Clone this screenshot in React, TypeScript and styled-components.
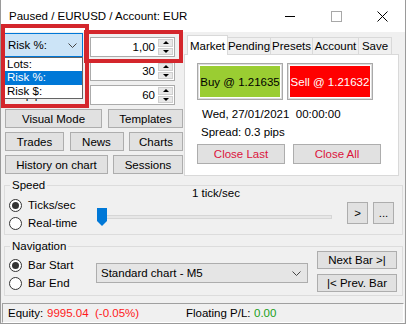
import styled, { createGlobalStyle } from "styled-components";

const GlobalStyle = createGlobalStyle`
  body {
    margin: 0;
    font-family: "Liberation Sans", Arial, sans-serif;
    font-size: 11px;
    color: #000;
  }
`;

const Window = styled.div`
  position: relative;
  width: 406px;
  height: 324px;
  box-sizing: border-box;
  border: 1px solid #9a9a9a;
  border-top: none;
  background: #f0f0f0;
  display: flex;
  flex-direction: column;
  overflow: hidden;
`;

const TitleBar = styled.div`
  height: 32px;
  flex-shrink: 0;
  background: #fff;
  display: flex;
  align-items: center;
  padding-left: 8px;
`;

const Title = styled.div`
  flex: 1;
  font-size: 11.5px;
`;

const WinButton = styled.div`
  width: 46px;
  height: 32px;
  display: flex;
  align-items: center;
  justify-content: center;
`;

const MinLine = styled.div`
  width: 10px;
  height: 1px;
  background: #000;
`;

const MaxBox = styled.div`
  width: 9px;
  height: 9px;
  border: 1px solid #a8a8a8;
`;

// top part: parameters on the left, tabs on the right
const TopSection = styled.div`
  height: 144px;
  flex-shrink: 0;
  display: flex;
`;

const LeftCol = styled.div`
  width: 179px;
  padding: 1px 0 0 3px;
`;

const ParamRow = styled.div`
  position: relative;
  width: 171px;
  height: 24px;
  display: flex;
  align-items: flex-end;
  justify-content: space-between;
`;

const ParamLabel = styled.div`
  height: 20px;
  line-height: 20px;
  padding-left: 4px;
  font-size: 11.5px;
`;

const Combo = styled.div`
  width: 79px;
  height: 24px;
  box-sizing: border-box;
  background: #cce4f7;
  border: 1px solid #0078d7;
  display: flex;
  align-items: center;
  justify-content: space-between;
  padding: 0 5px 0 3px;
  font-size: 11.5px;
`;

const DropList = styled.div`
  position: absolute;
  left: 0;
  top: 24px;
  width: 79px;
  box-sizing: border-box;
  border: 1px solid #646464;
  background: #fff;
  z-index: 2;
`;

const DropItem = styled.div<{ $active?: boolean }>`
  height: 13.3px;
  line-height: 13px;
  padding-left: 2px;
  font-size: 11.5px;
  background: ${(p) => (p.$active ? "#0078d7" : "#fff")};
  color: ${(p) => (p.$active ? "#fff" : "#000")};
`;

const NumInput = styled.div`
  width: 85px;
  height: 20px;
  box-sizing: border-box;
  border: 1px solid #ababab;
  background: #fff;
  display: flex;
`;

const NumValue = styled.div`
  flex: 1;
  text-align: right;
  line-height: 18px;
  padding-right: 3px;
  font-size: 11.5px;
`;

const Spinner = styled.div`
  width: 15px;
  display: flex;
  flex-direction: column;
  gap: 1px;
  padding: 1px 1px 1px 0;
`;

const SpinBtn = styled.div<{ $down?: boolean }>`
  flex: 1;
  background: #e8e8e8;
  border: 1px solid #cfcfcf;
  display: flex;
  align-items: center;
  justify-content: center;

  &::after {
    content: "";
    border-left: 3px solid transparent;
    border-right: 3px solid transparent;
    ${(p) =>
      p.$down ? "border-top: 3px solid #000;" : "border-bottom: 3px solid #000;"}
  }
`;

const ButtonGrid = styled.div`
  margin: 4px 0 0 1px;
  width: 178px;
  display: flex;
  flex-direction: column;
  gap: 4px;
`;

const ButtonRow = styled.div`
  display: flex;
  justify-content: space-between;
`;

const Button = styled.div<{ $w: number; $h?: number; $color?: string }>`
  width: ${(p) => p.$w}px;
  height: ${(p) => p.$h ?? 19}px;
  box-sizing: border-box;
  background: #e1e1e1;
  border: 1px solid #adadad;
  color: ${(p) => p.$color ?? "#000"};
  display: flex;
  align-items: center;
  justify-content: center;
  font-size: 11.5px;
  white-space: pre;
`;

const TabArea = styled.div`
  width: 215px;
  margin-left: 1px;
  display: flex;
  flex-direction: column;
`;

const TabStrip = styled.div`
  height: 22px;
  display: flex;
  align-items: flex-end;
  padding-left: 4px;
`;

const Tab = styled.div<{ $w: number; $active?: boolean }>`
  position: relative;
  width: ${(p) => p.$w}px;
  height: ${(p) => (p.$active ? 20 : 17)}px;
  box-sizing: border-box;
  border: 1px solid #d9d9d9;
  border-bottom: none;
  margin-left: -1px;
  margin-bottom: ${(p) => (p.$active ? -1 : 0)}px;
  background: ${(p) => (p.$active ? "#fff" : "#f0f0f0")};
  z-index: ${(p) => (p.$active ? 1 : 0)};
  display: flex;
  align-items: center;
  justify-content: center;
  font-size: 11.5px;
`;

const TabPanel = styled.div`
  height: 122px;
  box-sizing: border-box;
  background: #fff;
  border: 1px solid #d9d9d9;
  padding: 8px 0 0 12px;
`;

const TradeRow = styled.div`
  display: flex;
  gap: 4px;
`;

const TradeButton = styled.div<{ $bg: string; $fg: string }>`
  width: 86px;
  height: 37px;
  box-sizing: border-box;
  border: 1px solid #a9a9a9;
  box-shadow: inset 0 0 0 1px #dedede;
  padding: 2px;
  background: ${(p) => p.$bg};
  background-clip: content-box;
  color: ${(p) => p.$fg};
  display: flex;
  align-items: center;
  justify-content: center;
  font-size: 11.5px;
`;

const InfoLine = styled.div<{ $mt: number; $ml: number }>`
  margin: ${(p) => p.$mt}px 0 0 ${(p) => p.$ml}px;
  line-height: 13px;
  white-space: pre;
  font-size: 11.5px;
`;

const CloseRow = styled.div`
  margin-top: 5px;
  display: flex;
  gap: 8px;
`;

// group boxes
const GroupBox = styled.fieldset<{ $mt: number }>`
  margin: ${(p) => p.$mt}px 2px 0 3px;
  padding: 0;
  border: 1px solid #dcdcdc;
  height: 56px;
  box-sizing: border-box;
  min-width: 0;
  flex-shrink: 0;
`;

const Legend = styled.legend`
  margin-left: 5px;
  padding: 0 2px;
  line-height: 13px;
  font-size: 11.5px;
`;

const GroupInner = styled.div`
  display: flex;
  height: 42px;
`;

const RadioGroup = styled.div<{ $pt: number }>`
  width: 87px;
  padding: ${(p) => p.$pt}px 0 0 4px;
`;

const RadioRow = styled.div`
  height: 18px;
  display: flex;
  align-items: center;
  gap: 6px;
  font-size: 11.5px;
`;

const RadioCircle = styled.div<{ $checked?: boolean }>`
  width: 13px;
  height: 13px;
  box-sizing: border-box;
  border: 1px solid #333;
  border-radius: 50%;
  background: #fff;
  display: flex;
  align-items: center;
  justify-content: center;

  &::after {
    content: "";
    width: 7px;
    height: 7px;
    border-radius: 50%;
    background: ${(p) => (p.$checked ? "#333" : "transparent")};
  }
`;

const SpeedMiddle = styled.div`
  width: 240px;
  margin-top: -5px;
`;

const SpeedLabel = styled.div`
  text-align: center;
  line-height: 13px;
  font-size: 11.5px;
`;

const Slider = styled.div`
  position: relative;
  margin-top: 8px;
  height: 18px;
  padding: 0 4px;
  display: flex;
  align-items: center;
`;

const Track = styled.div`
  flex: 1;
  height: 4px;
  box-sizing: border-box;
  background: #e7e7e7;
  border: 1px solid #d6d6d6;
`;

const Thumb = styled.svg`
  position: absolute;
  left: 1px;
  top: 0;
`;

const SideButtons = styled.div<{ $ml: number; $mt: number; $dir: string }>`
  margin: ${(p) => p.$mt}px 0 0 ${(p) => p.$ml}px;
  display: flex;
  flex-direction: ${(p) => p.$dir};
  gap: 5px;
`;

const ChartCombo = styled.div`
  margin-top: 10px;
  width: 212px;
  height: 20px;
  box-sizing: border-box;
  background: #e5e5e5;
  border: 1px solid #adadad;
  display: flex;
  align-items: center;
  justify-content: space-between;
  padding: 0 6px 0 4px;
  font-size: 11.5px;
`;

const StatusBar = styled.div`
  margin: 7px 1px 1px 1px;
  height: 20px;
  flex-shrink: 0;
  box-sizing: border-box;
  border-top: 1px solid #a0a0a0;
  border-left: 1px solid #a0a0a0;
  border-right: 1px solid #fff;
  border-bottom: 1px solid #fff;
  display: flex;
  align-items: center;
  padding-left: 5px;
  font-size: 11.5px;
`;

const StatusCell = styled.span<{ $w?: number; $color?: string }>`
  width: ${(p) => (p.$w ? `${p.$w}px` : "auto")};
  color: ${(p) => p.$color ?? "#000"};
  white-space: pre;
`;

const Annotation = styled.div<{ $x: number; $y: number; $w: number; $h: number }>`
  position: absolute;
  left: ${(p) => p.$x}px;
  top: ${(p) => p.$y}px;
  width: ${(p) => p.$w}px;
  height: ${(p) => p.$h}px;
  box-sizing: border-box;
  border: 4.5px solid #d4262c;
  pointer-events: none;
  z-index: 5;
`;

function Chevron() {
  return (
    <svg width="9" height="5" viewBox="0 0 9 5">
      <polyline points="0.5,0.5 4.5,4.5 8.5,0.5" fill="none" stroke="#444" strokeWidth="1" />
    </svg>
  );
}

function Radio({ label, checked }: { label: string; checked?: boolean }) {
  return (
    <RadioRow>
      <RadioCircle $checked={checked} />
      {label}
    </RadioRow>
  );
}

function Spin({ value }: { value: string }) {
  return (
    <NumInput>
      <NumValue>{value}</NumValue>
      <Spinner>
        <SpinBtn />
        <SpinBtn $down />
      </Spinner>
    </NumInput>
  );
}

const tabs = [
  { name: "Market", w: 41, active: true },
  { name: "Pending", w: 44 },
  { name: "Presets", w: 43 },
  { name: "Account", w: 47 },
  { name: "Save", w: 34 },
];

export default function App() {
  return (
    <>
      <GlobalStyle />
      <Window>
        <TitleBar>
          <Title>Paused / EURUSD / Account: EUR</Title>
          <WinButton>
            <MinLine />
          </WinButton>
          <WinButton>
            <MaxBox />
          </WinButton>
          <WinButton>
            <svg width="11" height="11" viewBox="0 0 11 11">
              <path d="M0.5 0.5 L10.5 10.5 M10.5 0.5 L0.5 10.5" stroke="#000" strokeWidth="1" />
            </svg>
          </WinButton>
        </TitleBar>

        <TopSection>
          <LeftCol>
            <ParamRow>
              <Combo>
                Risk %:
                <Chevron />
              </Combo>
              <Spin value="1,00" />
              <DropList>
                <DropItem>Lots:</DropItem>
                <DropItem $active>Risk %:</DropItem>
                <DropItem>Risk $:</DropItem>
              </DropList>
            </ParamRow>
            <ParamRow>
              <span />
              <Spin value="30" />
            </ParamRow>
            <ParamRow>
              <ParamLabel>TP pips:</ParamLabel>
              <Spin value="60" />
            </ParamRow>

            <ButtonGrid>
              <ButtonRow>
                <Button $w={97}>Visual Mode</Button>
                <Button $w={75}>Templates</Button>
              </ButtonRow>
              <ButtonRow>
                <Button $w={59}>Trades</Button>
                <Button $w={54}>News</Button>
                <Button $w={54}>Charts</Button>
              </ButtonRow>
              <ButtonRow>
                <Button $w={103}>History on chart</Button>
                <Button $w={70}>Sessions</Button>
              </ButtonRow>
            </ButtonGrid>
          </LeftCol>

          <TabArea>
            <TabStrip>
              {tabs.map((t) => (
                <Tab key={t.name} $w={t.w} $active={t.active}>
                  {t.name}
                </Tab>
              ))}
            </TabStrip>
            <TabPanel>
              <TradeRow>
                <TradeButton $bg="#9acd32" $fg="#000">Buy @ 1.21635</TradeButton>
                <TradeButton $bg="#ff0000" $fg="#fff">Sell @ 1.21632</TradeButton>
              </TradeRow>
              <InfoLine $mt={8} $ml={5}>Wed, 27/01/2021  00:00:00</InfoLine>
              <InfoLine $mt={5} $ml={4}>Spread: 0.3 pips</InfoLine>
              <CloseRow>
                <Button $w={88} $h={20} $color="#dc143c">Close Last</Button>
                <Button $w={88} $h={20} $color="#dc143c">Close All</Button>
              </CloseRow>
            </TabPanel>
          </TabArea>
        </TopSection>

        <GroupBox $mt={3}>
          <Legend>Speed</Legend>
          <GroupInner>
            <RadioGroup $pt={4}>
              <Radio label="Ticks/sec" checked />
              <Radio label="Real-time" />
            </RadioGroup>
            <SpeedMiddle>
              <SpeedLabel>1 tick/sec</SpeedLabel>
              <Slider>
                <Track />
                <Thumb width="10" height="18" viewBox="0 0 10 18">
                  <polygon points="0,0 10,0 10,13 5,18 0,13" fill="#0078d7" />
                </Thumb>
              </Slider>
            </SpeedMiddle>
            <SideButtons $ml={11} $mt={10} $dir="row">
              <Button $w={21} $h={22}>&gt;</Button>
              <Button $w={21} $h={22}>...</Button>
            </SideButtons>
          </GroupInner>
        </GroupBox>

        <GroupBox $mt={5}>
          <Legend>Navigation</Legend>
          <GroupInner>
            <RadioGroup $pt={3}>
              <Radio label="Bar Start" checked />
              <Radio label="Bar End" />
            </RadioGroup>
            <ChartCombo>
              Standard chart - M5
              <Chevron />
            </ChartCombo>
            <SideButtons $ml={9} $mt={-2} $dir="column">
              <Button $w={80} $h={18}>Next Bar &gt;|</Button>
              <Button $w={80} $h={18}>|&lt; Prev. Bar</Button>
            </SideButtons>
          </GroupInner>
        </GroupBox>

        <StatusBar>
          <StatusCell $w={39}>Equity:</StatusCell>
          <StatusCell $w={48} $color="#ff1a1a">9995.04</StatusCell>
          <StatusCell $w={91} $color="#ff1a1a">(-0.05%)</StatusCell>
          <StatusCell $w={68}>Floating P/L:</StatusCell>
          <StatusCell $color="#1aa01a">0.00</StatusCell>
        </StatusBar>

        <Annotation $x={0} $y={24} $w={88} $h={84} />
        <Annotation $x={83} $y={30} $w={99} $h={33} />
      </Window>
    </>
  );
}
